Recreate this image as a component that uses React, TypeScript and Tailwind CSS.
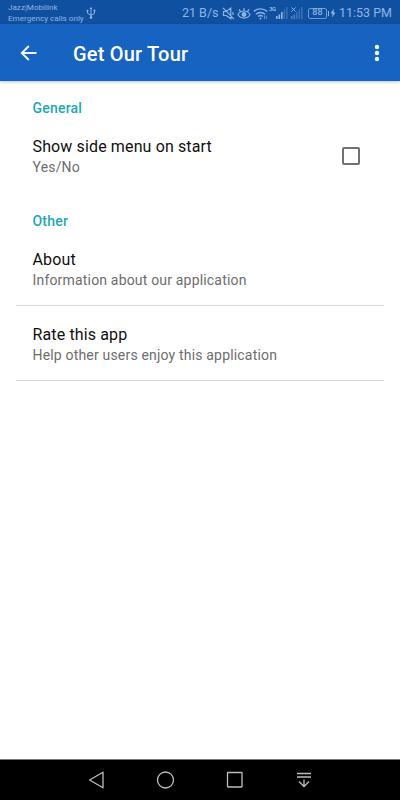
import React from 'react';

function UsbIcon() {
  return (
    <svg width="10" height="14" viewBox="0 0 10 14" fill="none" stroke="#8fb5e2" strokeWidth="1">
      <path d="M5 2v9M1.5 5v2.2L5 9.4l3.5-2V4.5" />
      <path d="M3.6 3L5 .8 6.4 3z" fill="#8fb5e2" stroke="none" />
      <circle cx="1.5" cy="4.8" r="1" fill="#8fb5e2" stroke="none" />
      <circle cx="5" cy="11.6" r="1.3" fill="#8fb5e2" stroke="none" />
      <path d="M7.6 3.6h1.8v1.8H7.6z" fill="#8fb5e2" stroke="none" />
    </svg>
  );
}

function MuteIcon() {
  return (
    <svg width="13" height="13" viewBox="0 0 13 13" fill="none" stroke="#8fb5e2" strokeWidth="1.2">
      <path d="M1.5 4.5v4h2.7l4.6 3.3V1.2L4.2 4.5zM1 .8l11 11.4M11 5v3" />
    </svg>
  );
}

function EyeIcon() {
  return (
    <svg width="14" height="13" viewBox="0 0 14 13" fill="none" stroke="#8fb5e2" strokeWidth="1.2">
      <path d="M1 7.5C3.5 2.8 10.5 2.8 13 7.5C10.5 12.2 3.5 12.2 1 7.5zM7 4V1M3.5 4.7L2 2.4M10.5 4.7L12 2.4" />
      <circle cx="7" cy="7.5" r="2.4" fill="#8fb5e2" stroke="none" />
    </svg>
  );
}

function WifiIcon() {
  return (
    <svg width="15" height="13" viewBox="0 0 15 13" fill="none" stroke="#8fb5e2" strokeWidth="1.4">
      <path d="M.8 4.5C4.5 1 10.5 1 14.2 4.5M3 7.3C5.5 4.9 9.5 4.9 12 7.3M5.2 9.6C6.5 8.4 8.5 8.4 9.8 9.6" />
      <circle cx="7.5" cy="11.4" r="1" fill="#8fb5e2" stroke="none" />
      <path d="M11.5 8.5v3.5M13.3 8.5v3.5" strokeWidth=".7" />
    </svg>
  );
}

function SignalIcon({ active }: { active: boolean }) {
  const on = active ? '#8fb5e2' : '#376fb5';
  return (
    <svg width="12" height="12" viewBox="0 0 12 12">
      <path d="M0 9h1.6v3H0zM2.5 7.5h1.6V12H2.5z" fill={active ? on : '#527fbd'} />
      <path d="M5 5h1.6v7H5z" fill={on} />
      <path d="M7.5 2.5h1.6V12H7.5zM10 0h1.6v12H10z" fill="#376fb5" />
    </svg>
  );
}

function StatusBar() {
  return (
    <div className="flex h-6 shrink-0 justify-between bg-[#1050a1] px-2 text-[#8fb5e2]">
      <div className="flex">
        <div className="pt-[2px] text-[8.1px] leading-[11px]">
          <div className="whitespace-nowrap">Jazz|Mobilink</div>
          <div className="whitespace-nowrap">Emergency calls only</div>
        </div>
        <div className="ml-[2px] pt-[6px]"><UsbIcon /></div>
      </div>
      <div className="flex h-[26px] items-center text-[12.5px]">
        <span className="w-[40px] whitespace-nowrap">21 B/s</span>
        <span className="w-[15px]"><MuteIcon /></span>
        <span className="w-[16px]"><EyeIcon /></span>
        <span className="w-[16px]"><WifiIcon /></span>
        <span className="w-[7px] self-start pt-[6px] text-[6px] font-bold leading-[6px] tracking-[-0.3px]">3G</span>
        <span className="w-[15px]"><SignalIcon active /></span>
        <span className="relative w-[17px]">
          <SignalIcon active={false} />
          <svg className="absolute left-0 top-0" width="5" height="5" viewBox="0 0 5 5" stroke="#8fb5e2">
            <path d="M.5 .5l4 4M4.5 .5l-4 4" />
          </svg>
        </span>
        <span className="flex h-[11px] w-[19px] items-center justify-center rounded-[2px] border border-[#6c98d0] text-[9px] font-medium">88</span>
        <span className="mr-[1px] h-[5px] w-[2px] border-r border-[#8fb5e2]" />
        <svg width="6" height="10" viewBox="0 0 6 10" fill="#8fb5e2"><path d="M3.8 .5L.5 5.5h2L2 9.5 5.5 4.5h-2z" /></svg>
        <span className="ml-[3px] whitespace-nowrap">11:53 PM</span>
      </div>
    </div>
  );
}

function Row({ title, note }: { title: string; note: string }) {
  return (
    <div className="pl-[16.5px]">
      <div className="text-[16px] leading-[22px] tracking-[0.13px] text-[#101010]">{title}</div>
      <div className="mt-[-1px] text-[14px] leading-5 tracking-[0.18px] text-[#6d6d6d]">{note}</div>
    </div>
  );
}

export default function App() {
  return (
    <div className="flex h-[800px] w-[400px] flex-col overflow-hidden bg-white font-['Roboto',sans-serif]">
      <StatusBar />
      <header className="flex h-[57px] shrink-0 items-center bg-[#1763c1] text-white shadow-[0_1px_3px_rgba(0,0,0,0.25)]">
        <svg className="ml-5" width="18" height="18" viewBox="0 0 18 18" fill="none" stroke="#f2faff" strokeWidth="1.9">
          <path d="M16.5 9H2M8.8 2L1.8 9l7 7" />
        </svg>
        <h1 className="ml-[35px] pt-[2px] text-[20px] font-medium leading-7 tracking-[0.2px]">Get Our Tour</h1>
        <svg className="ml-auto mr-[20px]" width="6" height="18" viewBox="0 0 6 18" fill="#f2faff">
          <circle cx="3" cy="3" r="2.2" /><circle cx="3" cy="9" r="2.2" /><circle cx="3" cy="15" r="2.2" />
        </svg>
      </header>
      <main className="flex-1 px-4 pt-[17px]">
        <h2 className="pl-[16.5px] text-[14px] font-medium leading-5 tracking-[0.2px] text-[#18a9b4]">General</h2>
        <div className="mt-[18px] flex items-center justify-between">
          <Row title="Show side menu on start" note="Yes/No" />
          <div className="mr-[24px] mt-[-1px] h-[18px] w-[18px] rounded-[2px] border-2 border-[#717171]" />
        </div>
        <h2 className="mt-[34px] pl-[16.5px] text-[14px] font-medium leading-5 tracking-[0.2px] text-[#18a9b4]">Other</h2>
        <div className="mt-[18px] h-[57px] border-b border-[#d9d9d9]">
          <Row title="About" note="Information about our application" />
        </div>
        <div className="h-[75px] border-b border-[#d9d9d9] pt-[18px]">
          <Row title="Rate this app" note="Help other users enjoy this application" />
        </div>
      </main>
      <nav className="flex h-[41px] shrink-0 items-center border-t border-[#777777] bg-black pl-[88px]">
        <svg width="17" height="18" viewBox="0 0 17 18" fill="none" stroke="#bdbdbd" strokeWidth="1.3"><path d="M15 1.2v15.6L1.5 9z" strokeLinejoin="round" /></svg>
        <svg className="ml-[51px]" width="19" height="18" viewBox="0 0 19 18" fill="none" stroke="#bdbdbd" strokeWidth="1.3"><circle cx="9.5" cy="9" r="8" /></svg>
        <svg className="ml-[51px]" width="18" height="18" viewBox="0 0 18 18" fill="none" stroke="#bdbdbd" strokeWidth="1.3"><rect x="1.5" y="1.5" width="14.5" height="14.5" rx=".5" /></svg>
        <svg className="ml-[53px]" width="15" height="18" viewBox="0 0 15 18" fill="none" stroke="#bdbdbd" strokeWidth="1.3"><path d="M0 2.5h14M0 6h14M7 8.5v7M2 10.5l5 5 5-5" /></svg>
      </nav>
    </div>
  );
}
